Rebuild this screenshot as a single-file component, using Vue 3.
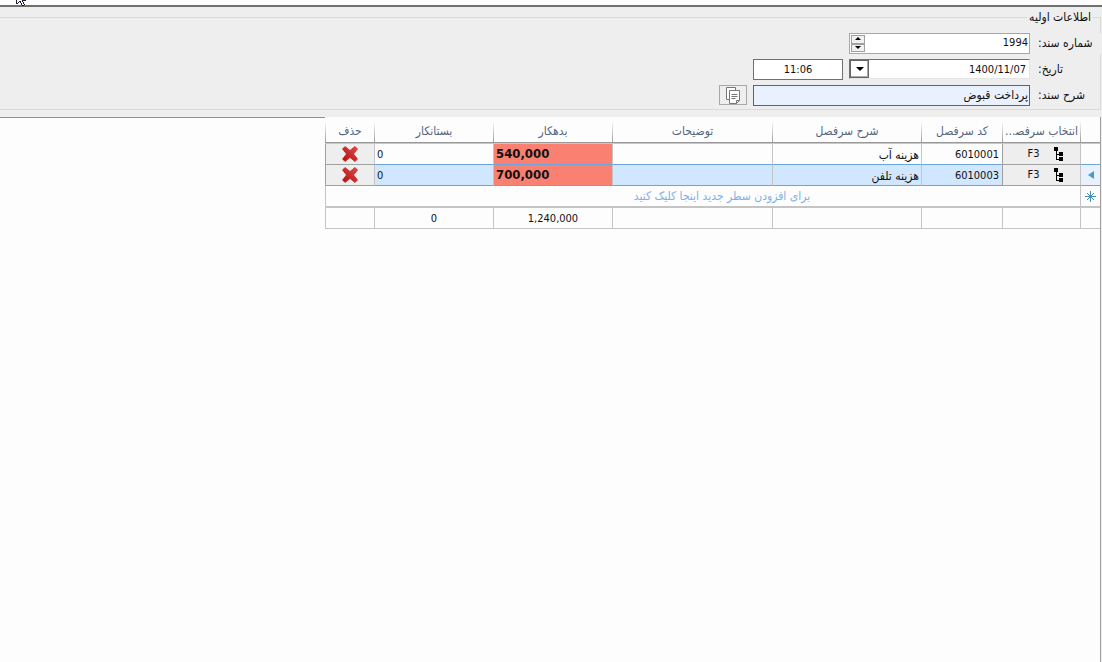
<script setup>
import { ref } from 'vue'

const number = ref('1994')
const date = ref('1400/11/07')
const time = ref('11:06')
const memo = ref('پرداخت قبوض')

const headers = ['انتخاب سرفص\u200D...', 'کد سرفصل', 'شرح سرفصل', 'توضیحات', 'بدهکار', 'بستانکار', 'حذف']

const rows = ref([
  { code: '6010001', title: 'هزینه آب', note: '', debit: '540,000', credit: '0' },
  { code: '6010003', title: 'هزینه تلفن', note: '', debit: '700,000', credit: '0' },
])
const current = ref(1)
</script>

<template>
  <div class="page" dir="rtl">
    <div class="strip">
      <svg class="pointer" width="12" height="6" viewBox="0 0 12 6" shape-rendering="crispEdges">
        <path d="M1 0h3v1h-1v1h-1v1h-1zM5 0h1v2h1v2h1v1h-1v-2h-1v-1h-1z" fill="#fff" />
        <path d="M0 0h1v4h-1zM1 3h1v1h-1zM2 2h1v1h-1zM3 1h1v1h-1zM4 1h1v2h-1zM5 3h1v2h-1zM6 5h2v1h-2zM6 0h1v2h-1zM7 2h1v2h-1zM8 4h1v1h-1zM7 0h3v1h-3z" fill="#1c1c30" />
      </svg>
    </div>

    <form class="panel" @submit.prevent>
      <fieldset class="group">
        <legend>اطلاعات اولیه</legend>
        <div class="line">
          <label for="doc-number">شماره سند:</label>
          <div class="box number">
            <input id="doc-number" v-model="number" type="text" dir="ltr">
            <span class="spin">
              <button type="button" aria-label="افزایش">
                <svg width="6" height="4" viewBox="0 0 6 4"><path d="M3 0L6 3H0z" /></svg>
              </button>
              <button type="button" aria-label="کاهش">
                <svg width="6" height="4" viewBox="0 0 6 4"><path d="M0 0H6L3 3z" /></svg>
              </button>
            </span>
          </div>
        </div>
        <div class="line">
          <label for="doc-date">تاریخ:</label>
          <div class="box date">
            <input id="doc-date" v-model="date" type="text" dir="ltr">
            <button class="drop" type="button" aria-label="تقویم">
              <svg width="8" height="4" viewBox="0 0 8 4"><path d="M0 0H8L4 4z" /></svg>
            </button>
          </div>
          <input v-model="time" class="time" type="text" dir="ltr" aria-label="ساعت">
        </div>
        <div class="line">
          <label for="doc-memo">شرح سند:</label>
          <input id="doc-memo" v-model="memo" class="memo" type="text">
          <button class="copy" type="button" aria-label="رونوشت">
            <svg width="15" height="17" viewBox="0 0 15 17" fill="#fff" stroke="#777">
              <path d="M.5 .5h9v12h-9z" />
              <path d="M3.500 3.500h10v10l-3 3h-7z" />
              <path d="M13.500 13.500h-3v3M5.500 7.500h6M5.500 9.500h6M5.500 11.500h4" fill="none" />
            </svg>
          </button>
        </div>
      </fieldset>
    </form>

    <main class="sheet">
      <table>
        <colgroup>
          <col class="c-mark"><col class="c-pick"><col class="c-code"><col class="c-title">
          <col class="c-note"><col class="c-sum"><col class="c-sum"><col class="c-del">
        </colgroup>
        <thead>
          <tr>
            <th></th>
            <th v-for="h in headers" :key="h" scope="col">{{ h }}</th>
          </tr>
        </thead>
        <tbody>
          <tr v-for="(r, i) in rows" :key="r.code" :class="{ current: i === current }" @click="current = i">
            <td class="mark">
              <svg v-if="i === current" width="6" height="8" viewBox="0 0 6 8"><path d="M0 4L6 0V8z" fill="#4a9cc8" /></svg>
            </td>
            <td class="tool">
              <button class="pick" type="button" dir="ltr">
                <span>F3</span>
                <svg width="10" height="14" viewBox="0 0 10 14" shape-rendering="crispEdges">
                  <path d="M0 0h4v4h-4zM5 5h4v4h-4zM5 10h4v4h-4zM2 4h1v9h-1zM3 7h2v1h-2zM3 12h2v1h-2z" />
                </svg>
              </button>
            </td>
            <td class="num">{{ r.code }}</td>
            <td class="title">{{ r.title }}</td>
            <td>{{ r.note }}</td>
            <td class="money debit">{{ r.debit }}</td>
            <td class="money">{{ r.credit }}</td>
            <td class="tool">
              <button class="del" type="button" aria-label="حذف">
                <svg width="16" height="16" viewBox="0 0 16 16">
                  <defs>
                    <linearGradient :id="'red' + i" x1="0" y1="1" x2="1" y2="0">
                      <stop offset="0" stop-color="#b80808" />
                      <stop offset="1" stop-color="#dc5050" />
                    </linearGradient>
                  </defs>
                  <path d="M3 0.500L8 4.500L13 0.500L15.500 3L11.500 8L15.500 13L13 15.500L8 11.500L3 15.500L0.500 13L4.500 8L0.500 3z" :fill="`url(#red${i})`" stroke="#c02828" stroke-width=".8" stroke-linejoin="round" />
                </svg>
              </button>
            </td>
          </tr>
          <tr class="new">
            <td class="mark">
              <svg width="11" height="11" viewBox="0 0 11 11" stroke="#4a90b8" fill="none">
                <path d="M5.500 0V11M0 5.500H11M2 2L9 9M9 2L2 9" />
              </svg>
            </td>
            <td class="hint" colspan="7">برای افزودن سطر جدید اینجا کلیک کنید</td>
          </tr>
        </tbody>
        <tfoot>
          <tr>
            <td></td><td></td><td></td><td></td><td></td>
            <td>1,240,000</td>
            <td>0</td>
            <td></td>
          </tr>
        </tfoot>
      </table>
    </main>
  </div>
</template>

<style>
body { margin: 0; background: #eee; }
</style>

<style scoped>
* { box-sizing: border-box; }
.page {
  min-height: 100vh;
  display: flex;
  flex-direction: column;
  font: 11px/14px "DejaVu Sans Condensed", Tahoma, sans-serif;
  color: #111;
}
input, button { font: inherit; color: inherit; margin: 0; padding: 0; border-radius: 0; }
button { display: flex; align-items: center; justify-content: center; }
input { outline: 0; min-width: 0; }
svg { display: block; flex: none; }
legend, label, .memo, th, .title, .hint { font-size: 12px; }

.strip { display: flex; direction: ltr; height: 7px; padding-left: 16px; border-bottom: 2px solid #707070; background: #fdfdfd; }

.panel { background: #eee; padding: 4px 0 7px; }
.group {
  margin: 0 1px 0 0;
  padding: 0 0 3px;
  border: 1px solid #dadada;
  border-left: 0;
  min-width: 0;
}
legend { margin-right: 7px; padding: 0 2px; line-height: 12px; }
.line { display: flex; gap: 6px; height: 21px; margin: 0 -2px 5px 0; }
.line:first-of-type { margin-top: 10px; }
.line:last-child { margin-bottom: 0; }
label {
  width: 66px;
  padding-left: 2px;
  text-align: left;
  line-height: 20px;
  white-space: nowrap;
}
.line:first-of-type label { background: #eee; }
.box { display: flex; width: 181px; background: #fff; }
.box input { flex: 1; border: 0; background: transparent; text-align: right; }
.number { border: 1px solid #a8a8a8; padding: 1px; }
.number input { padding: 0 0 2px; }
.spin { display: flex; flex-direction: column; width: 14px; margin-right: 2px; }
.spin button { flex: 1; min-height: 0; border: 1px solid #a0a0a0; background: #f0f0f0; }
.date { height: 20px; border: 1px solid #e4e4e4; border-top-color: #707070; border-left-color: #707070; }
.date input { padding: 2px 3px 0 0; }
.drop { width: 19px; height: 18px; border: 1px solid #666; background: #fff; box-shadow: inset -1px -1px #aaa; }
.time { width: 90px; border: 1px solid #707070; background: #fff; text-align: center; }
.memo { width: 277px; padding: 0 1px 2px; border: 1px solid #5c6470; background: #e9f1ff; }
.copy { width: 28px; height: 20px; border: 1px solid #a8a8a8; background: #eee; }

.sheet { flex: 1; margin-right: 1px; border-top: 1px solid #909090; border-right: 1px solid #a0a0a0; background: #fdfdfd; }
table {
  table-layout: fixed;
  width: 775px;
  margin-top: -1px;
  border-spacing: 0;
  background: #fdfdfd;
}
.c-mark { width: 20px; }
.c-pick { width: 78px; }
.c-code { width: 81px; }
.c-title { width: 149px; }
.c-note { width: 160px; }
.c-sum { width: 119px; }
.c-del { width: 49px; }
th {
  height: 27px;
  padding: 2px 1px 0 2px;
  font-weight: normal;
  color: #55657f;
  white-space: nowrap;
  background: linear-gradient(#fdfdfd 15%, #999) 0 0 / 1px 100% no-repeat;
  border-bottom: 1px solid #c8c8c8;
  box-shadow: inset 0 -1px #999;
}
td {
  height: 21px;
  padding: 2px 2px 0;
  border: solid #c4c4c4;
  border-width: 0 0 1px 1px;
  text-align: right;
  white-space: nowrap;
}
tbody tr:first-child td { border-bottom-color: #6aa5e0; }
.current td { background: #d1e7ff; border-bottom-color: #6aa5e0; }
tbody .mark { padding: 0; }
.mark svg { margin: 0 auto; }
.current .mark { background: #e9f1ff; }
.num { direction: ltr; }
.money { text-align: left; }
tbody .debit { padding-top: 0; background: #fa8072; font-size: 13px; font-weight: bold; }
tbody tr .tool { padding: 0; background: #eee; }
tbody tr:nth-child(n) .tool { border-color: #a0a0a0; }
.tool button { width: 100%; height: 20px; border: 0; background: transparent; }
.pick { gap: 14px; padding-left: 8px; }
.new td { height: 22px; border-bottom-width: 2px; color: #7db1e8; text-align: center; }
.new .hint { padding: 0 2px 0 40px; }
tfoot td { text-align: center; }
</style>
